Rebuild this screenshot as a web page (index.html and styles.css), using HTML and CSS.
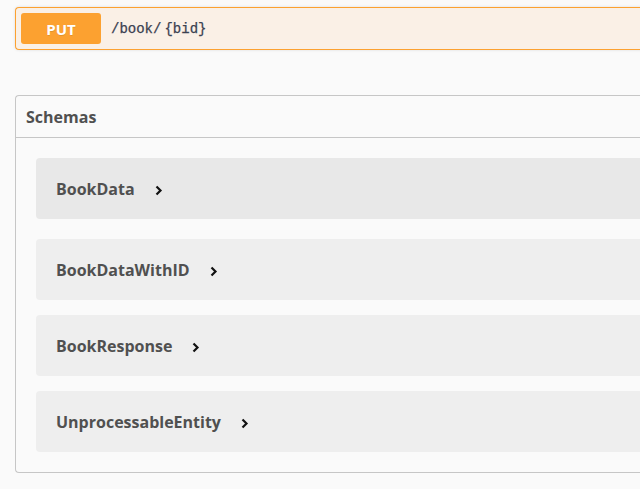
FILE: index.html
```html
<!DOCTYPE html>
<html>
<head>
<meta charset="utf-8">
<link rel="stylesheet" href="styles.css">
</head>
<body>
<div class="opblock">
  <span class="method">PUT</span>
  <span class="path">/book/<span class="param">{bid}</span></span>
</div>
<section class="models">
  <h4 class="models-title">Schemas</h4>
  <div class="model-list">
    <div class="model hover"><span class="model-title">BookData</span><svg class="chev" width="8" height="11" viewBox="0 0 8 11"><polyline points="1.5,1.5 5.5,5.5 1.5,9.5" fill="none" stroke="#111" stroke-width="2.2"/></svg></div>
    <div class="model gap"><span class="model-title">BookDataWithID</span><svg class="chev" width="8" height="11" viewBox="0 0 8 11"><polyline points="1.5,1.5 5.5,5.5 1.5,9.5" fill="none" stroke="#111" stroke-width="2.2"/></svg></div>
    <div class="model"><span class="model-title">BookResponse</span><svg class="chev" width="8" height="11" viewBox="0 0 8 11"><polyline points="1.5,1.5 5.5,5.5 1.5,9.5" fill="none" stroke="#111" stroke-width="2.2"/></svg></div>
    <div class="model"><span class="model-title">UnprocessableEntity</span><svg class="chev" width="8" height="11" viewBox="0 0 8 11"><polyline points="1.5,1.5 5.5,5.5 1.5,9.5" fill="none" stroke="#111" stroke-width="2.2"/></svg></div>
  </div>
</section>
</body>
</html>
```
FILE: styles.css
```css
html, body {
  margin: 0;
  padding: 0;
  background: #fafafa;
  overflow: hidden;
}
body {
  width: 640px;
  height: 489px;
  font-family: "Open Sans", sans-serif;
}
.opblock {
  margin: 7px 0 0 15px;
  width: 640px;
  box-sizing: border-box;
  height: 43px;
  border: 1px solid #fca130;
  border-right: 0;
  border-radius: 4px 0 0 4px;
  background: #faf0e6;
  box-shadow: 0 0 3px rgba(0,0,0,.12);
  padding: 5px;
  display: flex;
  align-items: center;
}
.method {
  width: 80px;
  height: 31px;
  border-radius: 3px;
  background: #fca130;
  color: #fff;
  font-weight: 700;
  font-size: 15px;
  display: flex;
  align-items: center;
  justify-content: center;
  text-shadow: 0 1px 0 rgba(0,0,0,.1);
}
.path {
  margin-left: 10px;
  font-family: "Liberation Mono", monospace;
  font-size: 14px;
  color: #3b4151;
  -webkit-text-stroke: 0.25px #3b4151;
}
.param {
  margin-left: 3px;
}
.models {
  margin: 45px 0 0 15px;
  width: 640px;
  box-sizing: border-box;
  border: 1px solid #c6c6c6;
  border-right: 0;
  border-radius: 4px 0 0 4px;
}
.models-title {
  margin: 0;
  height: 42px;
  box-sizing: border-box;
  padding: 0 10px;
  display: flex;
  align-items: center;
  font-size: 16px;
  font-weight: 700;
  color: #505050;
  border-bottom: 1px solid #c6c6c6;
}
.model-list {
  padding: 20px 0 20px 20px;
  display: flex;
  flex-direction: column;
  gap: 15px;
}
.model {
  height: 61px;
  border-radius: 4px 0 0 4px;
  background: #eeeeee;
  display: flex;
  align-items: center;
  padding-left: 20px;
}
.model.hover {
  background: #e8e8e8;
}
.model.gap {
  margin-top: 5px;
}
.model-title {
  font-size: 16px;
  font-weight: 700;
  color: #505050;
}
.chev {
  margin-left: 20px;
  margin-top: 3px;
}
```
